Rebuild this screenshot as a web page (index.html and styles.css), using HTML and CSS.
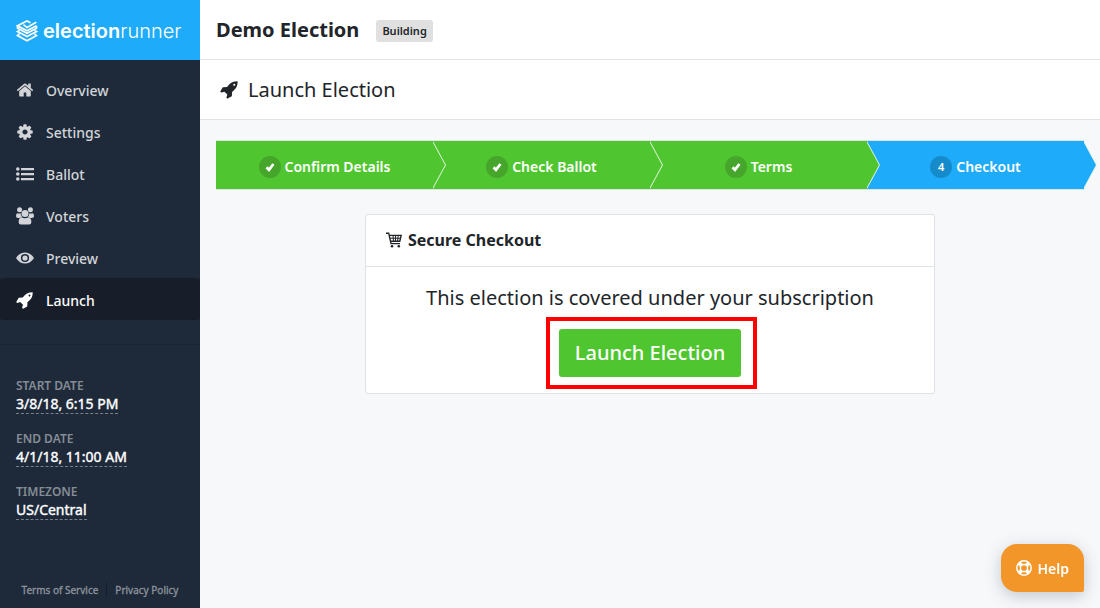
FILE: index.html
```html
<!DOCTYPE html>
<html lang="en">

<head>
  <meta charset="UTF-8">
  <meta name="viewport" content="width=device-width, initial-scale=1.0">
  <title>Launch Election</title>
  <link rel="stylesheet" href="styles.css">
</head>

<body>
  <!-- shared icons -->
  <svg class="sprite" aria-hidden="true">
    <symbol id="icon-rocket" viewBox="0 0 1792 1792">
      <path d="M1440 448q0-40-28-68t-68-28-68 28-28 68 28 68 68 28 68-28 28-68zm224-288q0 249-75.5 430.5t-253.5 360.5q-81 80-195 176l-20 379q-2 16-16 26l-384 224q-7 4-16 4-12 0-23-9l-64-64q-13-14-8-32l85-276-281-281-276 85q-3 1-9 1-14 0-23-9l-64-64q-17-19-5-39l224-384q10-14 26-16l379-20q96-114 176-195 188-187 358-258t431-71q14 0 24 9.5t10 22.5z"/>
    </symbol>
    <symbol id="icon-check" viewBox="0 0 12 12">
      <path d="M2.6 6.3L5 8.9L9.4 3" fill="none" stroke="currentColor" stroke-width="2.8"/>
    </symbol>
  </svg>

  <div class="layout">
    <aside class="sidebar">
      <a class="brand" href="#">
        <svg class="brand-icon" viewBox="0 0 22 22" aria-hidden="true">
          <path d="M14.5 2.8L11 1L1.5 5.8L11 10.8L20.5 5.8M7.4 4.6L11 7.4L20.3 2.2M1.5 5.8V8.2L11 13.2L20.5 8.2V5.8M3.4 10.4L1.5 11.6L11 16.6L20.5 11.6L18.6 10.4M3.4 14L1.5 15.6L11 20.8L20.5 15.6L18.6 14"/>
        </svg>
        <span class="brand-name"><b>election</b>runner</span>
      </a>

      <nav class="menu">
        <a class="menu-item" href="#">
          <svg class="menu-icon" viewBox="0 0 1792 1792" aria-hidden="true"><path d="M1472 992v480q0 26-19 45t-45 19h-384v-384h-256v384h-384q-26 0-45-19t-19-45v-480q0-1 .5-3t.5-3l575-474 575 474q1 2 1 6zm223-69l-62 74q-8 9-21 11h-3q-13 0-21-7l-692-577-692 577q-12 8-24 7-13-2-21-11l-62-74q-8-10-7-23.5t11-21.5l719-599q32-26 76-26t76 26l244 204v-195q0-14 9-23t23-9h192q14 0 23 9t9 23v408l219 182q10 8 11 21.5t-7 23.5z"/></svg>
          <span>Overview</span>
        </a>
        <a class="menu-item" href="#">
          <svg class="menu-icon" viewBox="0 0 1792 1792" aria-hidden="true"><path d="M1152 896q0-106-75-181t-181-75-181 75-75 181 75 181 181 75 181-75 75-181zm512-109v222q0 12-8 23t-20 13l-185 28q-19 54-39 91 35 50 107 138 10 12 10 25t-9 23q-27 37-99 108t-94 71q-12 0-26-9l-138-108q-44 23-91 38-16 136-29 186-7 28-36 28h-222q-14 0-24.5-8.5t-11.5-21.5l-28-184q-49-16-90-37l-141 107q-10 9-25 9-14 0-25-11-126-114-165-168-7-10-7-23 0-12 8-23 15-21 51-66.5t54-70.5q-27-50-41-99l-183-27q-13-2-21-12.5t-8-23.5v-222q0-12 8-23t19-13l186-28q14-46 39-92-40-57-107-138-10-12-10-24 0-10 9-23 26-36 98.5-107.5t94.5-71.5q13 0 26 10l138 107q44-23 91-38 16-136 29-186 7-28 36-28h222q14 0 24.5 8.5t11.5 21.5l28 184q49 16 90 37l142-107q9-9 24-9 13 0 25 10 129 119 165 170 7 8 7 22 0 12-8 23-15 21-51 66.5t-54 70.5q26 50 41 98l183 28q13 2 21 12.5t8 23.5z"/></svg>
          <span>Settings</span>
        </a>
        <a class="menu-item" href="#">
          <svg class="menu-icon" viewBox="0 0 18 18" aria-hidden="true"><circle cx="1.8" cy="4" r="1.8"/><circle cx="1.8" cy="9" r="1.8"/><circle cx="1.8" cy="14" r="1.8"/><path d="M5 3h13v2.2H5zM5 8h13v2.2H5zM5 13h13v2.2H5z"/></svg>
          <span>Ballot</span>
        </a>
        <a class="menu-item" href="#">
          <svg class="menu-icon" viewBox="0 0 18 18" aria-hidden="true"><circle cx="3.6" cy="2.8" r="2.5"/><circle cx="14.4" cy="2.8" r="2.5"/><circle cx="9" cy="6.4" r="3.5"/><path d="M1.4 6.2Q3 6.9 4.7 6.2Q4.7 8.4 6 9.9Q4.5 10 3.8 10.9H2Q0 10.9 0 9.2Q0 6.4 1.4 6.2zM16.6 6.2Q15 6.9 13.3 6.2Q13.3 8.4 12 9.9Q13.5 10 14.2 10.9H16Q18 10.9 18 9.2Q18 6.4 16.6 6.2zM5.6 10.2Q9 12.4 12.4 10.2Q15.4 10.8 15.4 15Q15.4 17.5 13 17.5H5Q2.6 17.5 2.6 15Q2.6 10.8 5.6 10.2z"/></svg>
          <span>Voters</span>
        </a>
        <a class="menu-item" href="#">
          <svg class="menu-icon" viewBox="0 0 18 18" aria-hidden="true"><path fill-rule="evenodd" d="M0 9Q3.5 3.4 9 3.4T18 9Q14.5 14.6 9 14.6T0 9zM9 4.9a4.1 4.1 0 1 0 0 8.2a4.1 4.1 0 1 0 0-8.2z"/><circle cx="9" cy="9" r="2.6"/></svg>
          <span>Preview</span>
        </a>
        <a class="menu-item active" href="#">
          <svg class="menu-icon" aria-hidden="true"><use href="#icon-rocket"/></svg>
          <span>Launch</span>
        </a>
      </nav>

      <dl class="details">
        <dt>START DATE</dt>
        <dd><span>3/8/18, 6:15 PM</span></dd>
        <dt>END DATE</dt>
        <dd><span>4/1/18, 11:00 AM</span></dd>
        <dt>TIMEZONE</dt>
        <dd><span>US/Central</span></dd>
      </dl>

      <div class="legal">
        <a href="#">Terms of Service</a>
        <a href="#">Privacy Policy</a>
      </div>
    </aside>

    <main class="main">
      <header class="topbar">
        <h1>Demo Election</h1>
        <span class="badge">Building</span>
      </header>
      <div class="page-title">
        <svg class="title-icon" aria-hidden="true"><use href="#icon-rocket"/></svg>
        <h2>Launch Election</h2>
      </div>

      <div class="content">
        <ol class="steps">
          <li class="step"><span class="step-mark"><svg aria-hidden="true"><use href="#icon-check"/></svg></span>Confirm Details</li>
          <li class="step"><span class="step-mark"><svg aria-hidden="true"><use href="#icon-check"/></svg></span>Check Ballot</li>
          <li class="step"><span class="step-mark"><svg aria-hidden="true"><use href="#icon-check"/></svg></span>Terms</li>
          <li class="step current"><span class="step-mark">4</span>Checkout</li>
        </ol>

        <section class="card">
          <h3 class="card-header">
            <svg class="cart-icon" viewBox="0 0 16 16" aria-hidden="true"><path d="M0 1.2H2.7L5 11.6H14M3.3 3.4H15.2L13.8 9.2H4.4" fill="none" stroke="currentColor" stroke-width="1.4"/><path d="M3.8 6.2H14.5M7 3.4L7.5 9.2M9.5 3.4V9.2M12.2 3.4L11.6 9.2" fill="none" stroke="currentColor"/><circle cx="6" cy="14.3" r="1.3"/><circle cx="12.8" cy="14.3" r="1.3"/></svg>
            Secure Checkout
          </h3>
          <div class="card-body">
            <p>This election is covered under your subscription</p>
            <div class="launch">
              <button type="button" class="launch-button">Launch Election</button>
            </div>
          </div>
        </section>
      </div>
    </main>
  </div>

  <button type="button" class="help">
    <svg class="help-icon" viewBox="0 0 16 16" aria-hidden="true"><circle cx="8" cy="8" r="7.2"/><circle cx="8" cy="8" r="3.6"/><path class="band" d="M3.2 3.2L5.4 5.4M12.8 3.2L10.6 5.4M3.2 12.8L5.4 10.6M12.8 12.8L10.6 10.6"/></svg>
    Help
  </button>
</body>

</html>
```

FILE: styles.css
```css
* {
  margin: 0;
  padding: 0;
  box-sizing: border-box;
}

body {
  font-family: "Noto Sans", "Open Sans", sans-serif;
  font-size: 14px;
  line-height: 20px;
  color: #212529;
  background: #f7f8fa;
}

a {
  color: inherit;
  text-decoration: none;
}

button {
  font-family: inherit;
  border: none;
  color: #fff;
  cursor: pointer;
}

svg {
  fill: currentColor;
  flex: none;
}

.sprite {
  position: absolute;
  width: 0;
  height: 0;
}

.layout {
  display: flex;
  min-height: 100vh;
}

/* sidebar */
.sidebar {
  width: 200px;
  flex: none;
  display: flex;
  flex-direction: column;
  background: #1e2a3a;
}

.brand {
  display: flex;
  align-items: center;
  gap: 5px;
  height: 60px;
  padding: 2px 16px 0;
  background: #1eabf9;
  color: #fff;
}

.brand-icon {
  width: 22px;
  height: 22px;
  fill: none;
  stroke: currentColor;
  stroke-width: 1.7;
}

.brand-name {
  font-family: Inter, sans-serif;
  font-size: 20px;
  font-weight: 300;
  line-height: 24px;
}

.brand-name b {
  font-weight: 600;
}

.menu {
  padding: 8px 0 24px;
  border-bottom: 1px solid #1a2432;
}

.menu-item {
  display: flex;
  align-items: center;
  gap: 12px;
  height: 42px;
  padding: 2px 16px 0;
  color: #d2d4d8;
  font-weight: 500;
}

.menu-item span {
  padding-top: 1px;
}

.menu-icon {
  width: 18px;
  height: 18px;
}

.menu-item.active {
  background: #171e29;
  border-radius: 3px;
  color: #fff;
}

.details {
  padding: 32px 16px 0;
}

.details dt {
  font-size: 12px;
  font-weight: 600;
  line-height: 17px;
  color: #858c94;
}

.details dd {
  margin-bottom: 16px;
  color: #fff;
  font-weight: 400;
  -webkit-text-stroke: 0.4px;
}

.details dd span {
  border-bottom: 1px dashed #78808a;
}

.legal {
  display: flex;
  justify-content: center;
  margin-top: auto;
  padding-bottom: 10px;
  font-size: 10px;
  line-height: 16px;
  color: #8e949c;
  -webkit-text-stroke: 0.3px;
}

.legal a {
  padding: 0 8px;
}

.legal a + a {
  border-left: 1px solid #171e29;
}

/* main */
.main {
  flex: 1;
  min-width: 0;
}

.topbar,
.page-title {
  display: flex;
  align-items: center;
  height: 60px;
  padding: 0 16px;
  background: #fff;
  border-bottom: 1px solid #dfe2e6;
}

.topbar {
  gap: 17px;
}

.topbar h1 {
  font-size: 20px;
  font-weight: 700;
}

.badge {
  margin-top: 2px;
  padding: 1px 6px;
  border-radius: 3px;
  background: #e0e0e0;
  font-size: 11px;
  font-weight: 600;
}

.page-title {
  gap: 9px;
  padding: 0 20px;
}

.page-title h2 {
  font-size: 20px;
  font-weight: 400;
}

.title-icon {
  width: 19px;
  height: 19px;
}

.content {
  padding: 20px 16px;
}

.steps {
  display: grid;
  grid-template-columns: repeat(4, 1fr);
  border: 1px solid #dfe2e6;
  border-width: 1px 0;
  margin-bottom: 24px;
  list-style: none;
}

.step {
  position: relative;
  display: flex;
  align-items: center;
  justify-content: center;
  gap: 4px;
  height: 48px;
  padding-top: 4px;
  background: #4fc62f;
  color: #fff;
  font-weight: 600;
}

/* arrow tip with a thin light edge behind it */
.step::before,
.step::after {
  content: "";
  position: absolute;
  z-index: 1;
  top: 0;
  left: 100%;
  width: 13px;
  height: 100%;
  background: #e5f4e3;
  clip-path: polygon(0 0, 100% 50%, 0 100%);
}

.step::after {
  left: calc(100% - 1px);
  background: #4fc62f;
}

.step-mark {
  display: flex;
  align-items: center;
  justify-content: center;
  width: 22px;
  height: 22px;
  border-radius: 50%;
  background: #46a52b;
  font-size: 11px;
}

.step-mark svg {
  width: 12px;
  height: 12px;
}

.step.current,
.step.current::after {
  background: #1eabf9;
}

.step.current .step-mark {
  background: #168bcb;
}

.card {
  max-width: 570px;
  margin: 0 auto;
  background: #fff;
  border: 1px solid #dfe2e6;
  border-radius: 3px;
}

.card-header {
  display: flex;
  align-items: center;
  gap: 6px;
  padding: 15px 20px 16px;
  border-bottom: 1px solid #dfe2e6;
  font-size: 16px;
  font-weight: 700;
}

.cart-icon {
  width: 16px;
  height: 16px;
}

.card-body {
  padding: 16px;
  text-align: center;
}

.card-body p {
  margin-bottom: 16px;
  font-size: 20px;
  line-height: 30px;
}

.launch {
  position: relative;
  width: fit-content;
  margin: 0 auto;
}

/* highlight frame around the button */
.launch::after {
  content: "";
  position: absolute;
  inset: -12px -16px -12px -13px;
  border: 4px solid #f00;
  pointer-events: none;
}

.launch-button {
  display: block;
  height: 48px;
  padding: 0 16px 2px;
  border-radius: 3px;
  background: #4fc62f;
  font-size: 20px;
  font-weight: 500;
}

.help {
  position: fixed;
  right: 16px;
  bottom: 16px;
  display: flex;
  align-items: center;
  gap: 6px;
  height: 48px;
  padding: 0 15px;
  border-radius: 16px 16px 2px 16px;
  background: #f39629;
  box-shadow: 0 4px 16px rgba(30, 60, 80, 0.25);
  font-size: 14px;
  font-weight: 600;
}

.help-icon {
  width: 16px;
  height: 16px;
  fill: none;
  stroke: currentColor;
  stroke-width: 1.5;
}

.help-icon .band {
  stroke-width: 4;
}
```
